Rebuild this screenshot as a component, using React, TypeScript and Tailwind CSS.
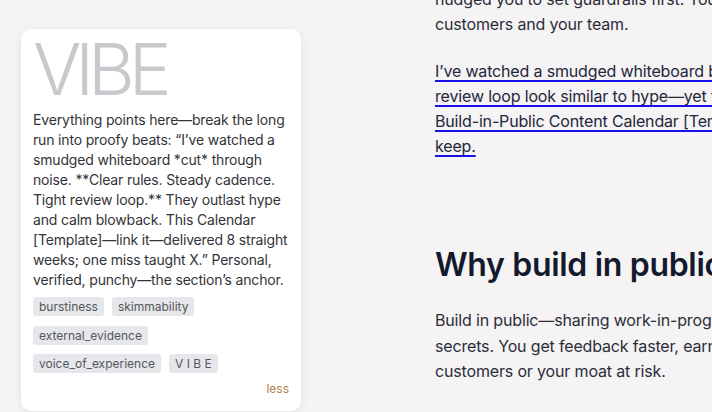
const tags = [["burstiness", "skimmability"], ["external_evidence"], ["voice_of_experience", "V I B E"]];

const noteLines = [
  "Everything points here—break the long",
  "run into proofy beats: “I’ve watched a",
  "smudged whiteboard *cut* through",
  "noise. **Clear rules. Steady cadence.",
  "Tight review loop.** They outlast hype",
  "and calm blowback. This Calendar",
  "[Template]—link it—delivered 8 straight",
  "weeks; one miss taught X.” Personal,",
  "verified, punchy—the section’s anchor.",
];

function NoteCard() {
  return (
    <div className="w-[280px] rounded-[10px] bg-white px-3 pb-[13px] pt-[4px] shadow-[0_2px_10px_rgba(0,0,0,0.08)]">
      <div className="text-[72px] font-light leading-[72px] tracking-[-0.085em] text-[#c8c8cd]">VIBE</div>
      <p className="mt-[5px] whitespace-nowrap text-[14px] leading-[20px] tracking-[-0.012em] text-[#333338]">
        {noteLines.map((l, i) => (
          <span key={i} className="block">
            {l}
          </span>
        ))}
      </p>
      <div className="mt-[7px] flex flex-col gap-[9.5px]">
        {tags.map((row, i) => (
          <div key={i} className="flex gap-2">
            {row.map((t) => (
              <span key={t} className="rounded-[3px] bg-[#e6e7ea] px-[6px] text-[12px] leading-[19px] text-[#55575c]">
                {t}
              </span>
            ))}
          </div>
        ))}
      </div>
      <div className="mt-[7px] text-right text-[12px] leading-[18px] text-[#b3804f]">less</div>
    </div>
  );
}

export default function App() {
  return (
    <div
      className="flex h-[412px] w-[712px] overflow-hidden bg-[#f5f3f3]"
      style={{ fontFamily: "Inter, 'Liberation Sans', sans-serif" }}
    >
      <div className="w-[435px] shrink-0 pl-[21px] pt-[29px]">
        <NoteCard />
      </div>
      <div className="-mt-[13px] whitespace-nowrap text-[16px] leading-[25px] tracking-[-0.01em] text-[#2b2d3a]">
        <p>nudged you to set guardrails first. You protect your</p>
        <p>customers and your team.</p>
        <p className="mt-[22px] text-[#23263b] underline decoration-[#1a10e6] decoration-2 underline-offset-[3px]">
          I’ve watched a smudged whiteboard beat every dashboard;
          <br />
          review loop look similar to hype—yet they outlast it.
          <br />
          Build-in-Public Content Calendar [Template] is the one I
          <br />
          keep.
        </p>
        <h2 className="mt-[86px] text-[32px] font-semibold leading-[40px] tracking-[-0.01em] text-[#141a2e]">
          Why build in public
        </h2>
        <p className="mt-[23px] leading-[25.5px]">
          Build in public—sharing work-in-progress without giving away
          <br />
          secrets. You get feedback faster, earn trust, and never put
          <br />
          customers or your moat at risk.
        </p>
      </div>
    </div>
  );
}
